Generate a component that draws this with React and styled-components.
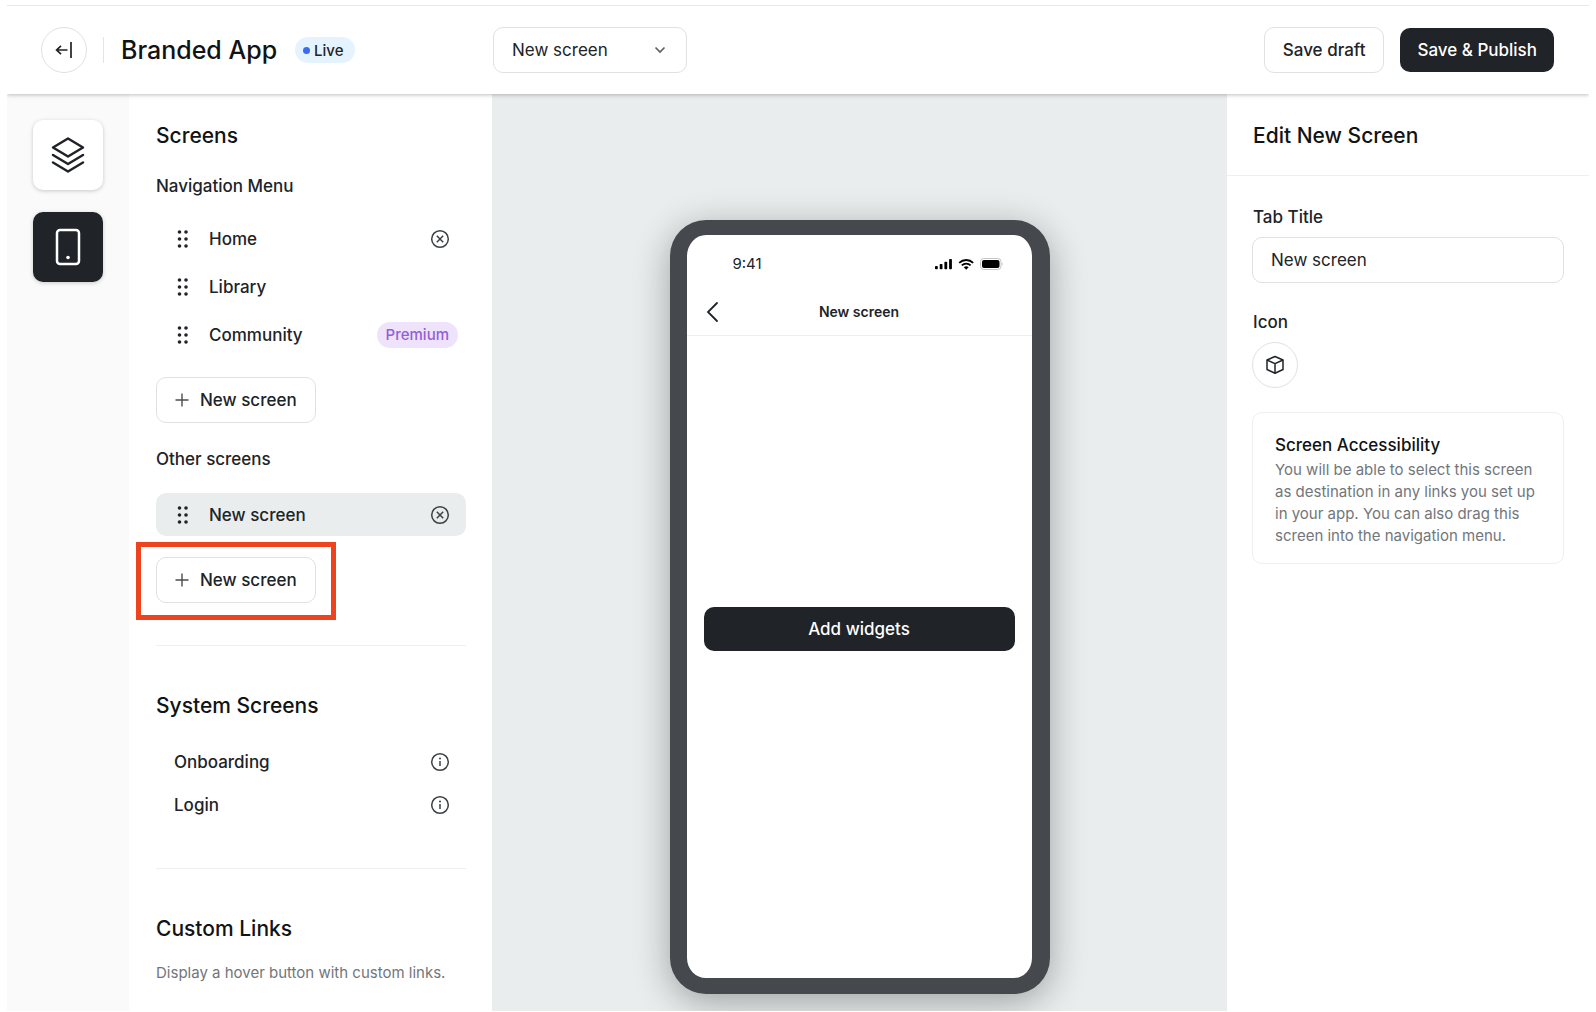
import React, { useState } from "react";
import styled, { createGlobalStyle } from "styled-components";

const navScreens = [
  { id: 1, name: "Home", removable: true },
  { id: 2, name: "Library" },
  { id: 3, name: "Community", premium: true },
];

const systemScreens = ["Onboarding", "Login"];

const BackIcon = () => (
  <svg width="18" height="18" viewBox="0 0 18 18" fill="none" stroke="#202327" strokeWidth="1.7">
    <path d="M12.5 9H1.5M6 4.8L1.6 9L6 13.2M16 1V17" />
  </svg>
);

const LayersIcon = () => (
  <svg width="36" height="38" viewBox="0 0 36 38" fill="none" stroke="#202327" strokeWidth="2.5" strokeLinecap="round" strokeLinejoin="round">
    <path d="M18 2.5L33 11.5L18 20.5L3 11.5Z" />
    <path d="M3 19L18 28L33 19" />
    <path d="M3 26.5L18 35.5L33 26.5" />
  </svg>
);

const MobileIcon = () => (
  <svg width="26" height="38" viewBox="0 0 26 38" fill="none">
    <rect x="2" y="2" width="22" height="34" rx="3" stroke="#fff" strokeWidth="2.5" />
    <circle cx="13" cy="29.5" r="1.8" fill="#fff" />
  </svg>
);

const DragIcon = () => (
  <svg width="12" height="20" viewBox="0 0 12 20" fill="#202327">
    <circle cx="2.5" cy="3" r="1.8" />
    <circle cx="9" cy="3" r="1.8" />
    <circle cx="2.5" cy="10" r="1.8" />
    <circle cx="9" cy="10" r="1.8" />
    <circle cx="2.5" cy="17" r="1.8" />
    <circle cx="9" cy="17" r="1.8" />
  </svg>
);

const RemoveIcon = () => (
  <svg width="20" height="20" viewBox="0 0 20 20" fill="none" stroke="#3d4043" strokeWidth="1.5">
    <circle cx="10" cy="10" r="8.3" />
    <path d="M6.8 6.8L13.2 13.2M13.2 6.8L6.8 13.2" />
  </svg>
);

const InfoIcon = () => (
  <svg width="20" height="20" viewBox="0 0 20 20" fill="none" stroke="#3d4043" strokeWidth="1.5">
    <circle cx="10" cy="10" r="8.3" />
    <path d="M10 9V14" />
    <circle cx="10" cy="6.6" r="1" fill="#3d4043" stroke="none" />
  </svg>
);

const PlusIcon = () => (
  <svg width="14" height="14" viewBox="0 0 14 14" stroke="#4a4d50" strokeWidth="1.4">
    <path d="M7 0.5V13.5M0.5 7H13.5" />
  </svg>
);

const CubeIcon = () => (
  <svg width="20" height="20" viewBox="0 0 20 20" fill="none" stroke="#202327" strokeWidth="1.5" strokeLinejoin="round">
    <path d="M10 1.5L18 5V14.5L10 18.3L2 14.5V5Z" />
    <path d="M2 5L10 8.6L18 5M10 8.6V18.3" />
  </svg>
);

const StatusIcons = () => (
  <svg width="72" height="14" viewBox="0 0 72 14" fill="#000">
    <rect x="1" y="9" width="2.8" height="3.2" rx="0.8" />
    <rect x="5.7" y="7" width="2.8" height="5.2" rx="0.8" />
    <rect x="10.4" y="4.7" width="2.8" height="7.5" rx="0.8" />
    <rect x="15.1" y="2" width="2.8" height="10.2" rx="0.8" />
    <g fill="none" stroke="#000" strokeWidth="1.8">
      <path d="M25.2 5.8A10.2 10.2 0 0 1 39.2 5.8" />
      <path d="M27.8 8.4A6.4 6.4 0 0 1 36.6 8.4" />
    </g>
    <path d="M29.8 10.3A3.6 3.6 0 0 1 34.6 10.3L32.2 12.8Z" />
    <rect x="46.5" y="1.5" width="20.5" height="11" rx="3.2" fill="none" stroke="#c4c4c4" />
    <rect x="48" y="3" width="17.5" height="8" rx="2" />
    <path d="M68.5 5.2Q70 7 68.5 8.8Z" fill="#b5b5b5" />
  </svg>
);

const App = () => {
  const [title, setTitle] = useState("New screen");

  return (
    <>
      <GlobalStyle />
      <Page>
        <Header>
          <Brand>
            <RoundButton aria-label="Back">
              <BackIcon />
            </RoundButton>
            <BrandDivider />
            <h1>Branded App</h1>
            <LiveBadge>Live</LiveBadge>
          </Brand>
          <SelectBox>
            <select aria-label="Screen" defaultValue="new">
              <option value="new">New screen</option>
            </select>
            <svg width="12" height="8" viewBox="0 0 12 8" fill="none" stroke="#5f6265" strokeWidth="1.7">
              <path d="M1.5 1.5L6 6L10.5 1.5" />
            </svg>
          </SelectBox>
          <Actions>
            <Button>Save draft</Button>
            <Button $dark>Save &amp; Publish</Button>
          </Actions>
        </Header>

        <Main>
          <Rail>
            <RailButton aria-label="Layers">
              <LayersIcon />
            </RailButton>
            <RailButton $active aria-label="Screens">
              <MobileIcon />
            </RailButton>
          </Rail>

          <Sidebar>
            <Section>
              <h2>Screens</h2>
              <h3>Navigation Menu</h3>
              <ScreenList $top="19px" $gap="5px">
                {navScreens.map((screen) => (
                  <ScreenRow key={screen.id}>
                    <DragIcon />
                    <ScreenName>{screen.name}</ScreenName>
                    {screen.removable && (
                      <IconButton aria-label={`Remove ${screen.name}`}>
                        <RemoveIcon />
                      </IconButton>
                    )}
                    {screen.premium && <PremiumBadge>Premium</PremiumBadge>}
                  </ScreenRow>
                ))}
              </ScreenList>
              <AddScreen>
                <Button>
                  <PlusIcon />
                  New screen
                </Button>
              </AddScreen>
              <h3>Other screens</h3>
              <ScreenList $top="22px">
                <ScreenRow $selected>
                  <DragIcon />
                  <ScreenName>New screen</ScreenName>
                  <IconButton aria-label="Remove New screen">
                    <RemoveIcon />
                  </IconButton>
                </ScreenRow>
              </ScreenList>
              <AddScreen $highlight>
                <Button>
                  <PlusIcon />
                  New screen
                </Button>
              </AddScreen>
            </Section>

            <Section>
              <h2>System Screens</h2>
              <ScreenList $top="20px">
                {systemScreens.map((name) => (
                  <ScreenRow key={name} $plain>
                    <ScreenName>{name}</ScreenName>
                    <IconButton aria-label={`About ${name}`}>
                      <InfoIcon />
                    </IconButton>
                  </ScreenRow>
                ))}
              </ScreenList>
            </Section>

            <Section>
              <h2>Custom Links</h2>
              <Hint>Display a hover button with custom links.</Hint>
            </Section>
          </Sidebar>

          <Canvas>
            <Phone>
              <StatusBar>
                <span>9:41</span>
                <StatusIcons />
              </StatusBar>
              <PhoneHeader>
                <IconButton aria-label="Previous screen">
                  <svg width="14" height="22" viewBox="0 0 14 22" fill="none" stroke="#202327" strokeWidth="1.8" strokeLinecap="round">
                    <path d="M12 2L3 11L12 20" />
                  </svg>
                </IconButton>
                <strong>{title}</strong>
              </PhoneHeader>
              <PhoneBody>
                <Button $dark>Add widgets</Button>
              </PhoneBody>
            </Phone>
          </Canvas>

          <Inspector>
            <InspectorHeader>
              <h2>Edit New Screen</h2>
            </InspectorHeader>
            <InspectorBody>
              <label htmlFor="tab-title">Tab Title</label>
              <TextInput
                id="tab-title"
                value={title}
                onChange={(e) => setTitle(e.target.value)}
              />
              <label htmlFor="tab-icon">Icon</label>
              <RoundButton id="tab-icon">
                <CubeIcon />
              </RoundButton>
              <InfoCard>
                <h4>Screen Accessibility</h4>
                <p>
                  You will be able to select this screen as destination in any
                  links you set up in your app. You can also drag this screen
                  into the navigation menu.
                </p>
              </InfoCard>
            </InspectorBody>
          </Inspector>
        </Main>
      </Page>
    </>
  );
};

const GlobalStyle = createGlobalStyle`
  * {
    box-sizing: border-box;
  }
  body {
    margin: 0;
    background: #fff;
    color: #202327;
    font-family: Inter, "Liberation Sans", sans-serif;
    font-size: 17px;
  }
  h1, h2, h3, h4, p, ul {
    margin: 0;
    padding: 0;
  }
  h2 {
    font-size: 21px;
    line-height: 28px;
    font-weight: 500;
    color: #111315;
  }
  button, input, select {
    font: inherit;
    color: inherit;
  }
  svg {
    display: block;
    flex: none;
  }
`;

const Page = styled.div`
  display: flex;
  flex-direction: column;
  min-height: 100vh;
  padding: 5px 7px 1px;
`;

const Header = styled.header`
  position: relative;
  z-index: 2;
  display: grid;
  grid-template-columns: 486px 1fr auto;
  align-items: center;
  height: 89px;
  padding-right: 35px;
  border-top: 1px solid #e8e8e8;
  background: #fff;
  box-shadow: 0 1px 4px rgba(0, 0, 0, 0.25);
  clip-path: inset(0 0 -8px 0);
`;

const Brand = styled.div`
  display: flex;
  align-items: center;
  padding-left: 34px;

  h1 {
    margin: 0 18px 0 17px;
    font-size: 25px;
    line-height: 32px;
    font-weight: 500;
    color: #111315;
  }
`;

const BrandDivider = styled.span`
  width: 1px;
  height: 26px;
  margin-left: 16px;
  background: #e2e4e8;
`;

const RoundButton = styled.button`
  display: flex;
  align-items: center;
  justify-content: center;
  width: 46px;
  height: 46px;
  padding: 0;
  border: 1px solid #dfe1e5;
  border-radius: 50%;
  background: #fff;
`;

const LiveBadge = styled.span`
  display: flex;
  align-items: center;
  gap: 4px;
  height: 26px;
  padding: 0 11px 0 8px;
  border-radius: 13px;
  background: #e5f3fe;
  font-size: 15px;
  font-weight: 500;

  &::before {
    content: "";
    width: 7px;
    height: 7px;
    border-radius: 50%;
    background: #3b6cf0;
  }
`;

const SelectBox = styled.div`
  position: relative;
  width: 194px;

  select {
    appearance: none;
    width: 100%;
    height: 46px;
    padding: 0 40px 0 18px;
    border: 1px solid #dfe1e5;
    border-radius: 10px;
    background: #fff;
  }
  svg {
    position: absolute;
    top: 19px;
    right: 21px;
    pointer-events: none;
  }
`;

const Actions = styled.div`
  display: flex;
  align-items: center;
  gap: 16px;
`;

const Button = styled.button`
  display: flex;
  align-items: center;
  justify-content: center;
  gap: 11px;
  height: ${({ $dark }) => ($dark ? "44px" : "46px")};
  padding: ${({ $dark }) => ($dark ? "0 17px" : "0 18px")};
  border: ${({ $dark }) => ($dark ? "none" : "1px solid #dfe1e5")};
  border-radius: 10px;
  background: ${({ $dark }) => ($dark ? "#202327" : "#fff")};
  color: ${({ $dark }) => ($dark ? "#fff" : "#202327")};
  font-weight: 500;
  white-space: nowrap;
`;

const IconButton = styled.button`
  padding: 0;
  border: none;
  background: none;
`;

const Main = styled.main`
  display: grid;
  grid-template-columns: 122px 363px 1fr 362px;
  flex: 1;
`;

const Rail = styled.nav`
  display: flex;
  flex-direction: column;
  align-items: center;
  gap: 22px;
  padding-top: 26px;
  background: #fafafa;
`;

const RailButton = styled.button`
  display: flex;
  align-items: center;
  justify-content: center;
  width: 70px;
  height: 70px;
  padding: 0;
  border: none;
  border-radius: 10px;
  background: ${({ $active }) => ($active ? "#202327" : "#fff")};
  box-shadow: 0 1px 4px rgba(0, 0, 0, 0.2);
`;

const Sidebar = styled.aside`
  padding: 28px 26px 0 27px;

  h3 {
    margin-top: 24px;
    font-size: 17px;
    line-height: 24px;
    font-weight: 500;
  }
`;

const Section = styled.section`
  & + & {
    margin-top: 42px;
    padding-top: 46px;
    border-top: 1px solid #efeff0;
  }
`;

const ScreenList = styled.ul`
  display: flex;
  flex-direction: column;
  gap: ${({ $gap }) => $gap || 0};
  margin-top: ${({ $top }) => $top};
  list-style: none;
`;

const ScreenRow = styled.li`
  display: flex;
  align-items: center;
  gap: 20px;
  height: 43px;
  padding: 0 16px 0 ${({ $plain }) => ($plain ? "18px" : "21px")};
  border-radius: 10px;
  background: ${({ $selected }) => ($selected ? "#e9edee" : "none")};
`;

const ScreenName = styled.span`
  flex: 1;
  font-weight: 500;
`;

const PremiumBadge = styled.span`
  height: 26px;
  margin-right: -8px;
  padding: 0 9px;
  border-radius: 13px;
  background: #efe3fb;
  color: #9160d8;
  font-size: 15px;
  font-weight: 500;
  line-height: 26px;
`;

const AddScreen = styled.div`
  position: relative;
  width: fit-content;
  margin-top: 21px;

  &::after {
    content: "";
    display: ${({ $highlight }) => ($highlight ? "block" : "none")};
    position: absolute;
    inset: -15px -20px -17px;
    border: 5px solid #ee431f;
    pointer-events: none;
  }
`;

const Hint = styled.p`
  margin-top: 20px;
  color: #72767b;
  font-size: 15px;
  line-height: 20px;
`;

const Canvas = styled.section`
  display: flex;
  justify-content: center;
  padding: 126px 16px 17px;
  background: #e9edee;
  overflow: hidden;
`;

const Phone = styled.div`
  width: 380px;
  min-height: 774px;
  border: solid #45484c;
  border-width: 15px 18px 16px 17px;
  border-radius: 36px;
  background: #fff;
  box-shadow: 0 8px 36px rgba(0, 0, 0, 0.32);
`;

const StatusBar = styled.div`
  display: flex;
  align-items: center;
  justify-content: space-between;
  height: 57px;
  padding: 0 26px 0 46px;
  font-size: 15px;
`;

const PhoneHeader = styled.div`
  display: grid;
  grid-template-columns: 14px 1fr 14px;
  align-items: center;
  height: 44px;
  padding: 0 18px 4px;
  border-bottom: 1px solid #efefef;
  text-align: center;

  strong {
    font-size: 14px;
    font-weight: 600;
  }
`;

const PhoneBody = styled.div`
  padding: 271px 17px 0;

  ${Button} {
    width: 100%;
  }
`;

const Inspector = styled.aside`
  min-width: 0;
`;

const InspectorHeader = styled.div`
  padding: 28px 26px 25px;
  border-bottom: 1px solid #efefef;
`;

const InspectorBody = styled.div`
  padding: 29px 25px 0;

  label {
    display: block;
    margin: 0 0 8px 1px;
    font-size: 17px;
    line-height: 24px;
    font-weight: 500;
  }
`;

const TextInput = styled.input`
  display: block;
  width: 100%;
  height: 46px;
  margin-bottom: 27px;
  padding: 0 18px;
  border: 1px solid #dfe1e5;
  border-radius: 10px;
  background: #fff;
`;

const InfoCard = styled.div`
  margin-top: 24px;
  padding: 20px 22px 16px;
  border: 1px solid #efefef;
  border-radius: 10px;

  h4 {
    margin-bottom: 2px;
    font-size: 17px;
    line-height: 24px;
    font-weight: 500;
    color: #111315;
  }
  p {
    color: #72767b;
    font-size: 15px;
    line-height: 22px;
  }
`;

export default App;
